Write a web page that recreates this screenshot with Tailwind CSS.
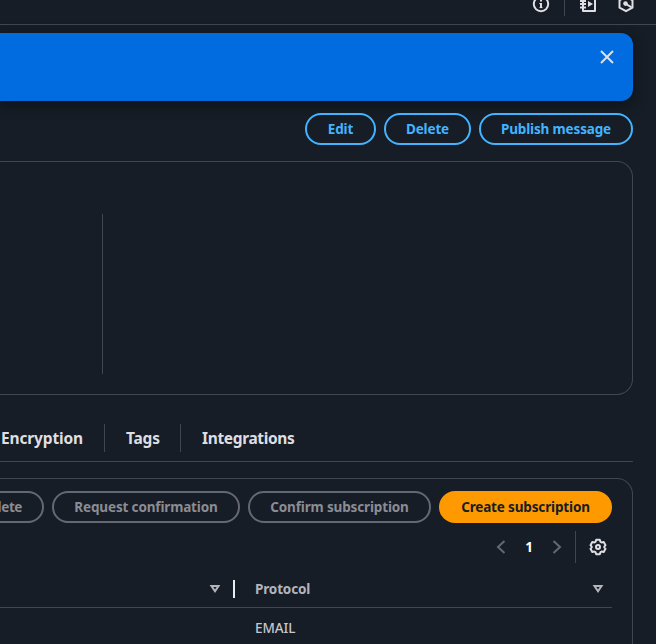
<!DOCTYPE html>
<html lang="en">
<head>
<meta charset="utf-8">
<title>Topic details</title>
<script src="https://cdn.jsdelivr.net/npm/@tailwindcss/browser@4"></script>
</head>
<body class="h-[644px] w-[656px] overflow-hidden bg-[#161d26] font-['Noto_Sans','Open_Sans',sans-serif] text-[13.5px] text-[#dedee3]">
<header class="flex h-[25px] items-start justify-end border-b border-[#424650] pr-[21px]">
  <svg class="-mt-[5px] h-[18px] w-[18px]" viewBox="0 0 18 18" fill="none" stroke="#dedee3" stroke-width="2"><circle cx="9" cy="9" r="7.200"/><path d="M9 8v5M9 4.500v2" /><path d="M7.300 8.500H9M7.500 12.600h3" stroke-width="1"/></svg>
  <span class="ml-[14px] h-4 w-px bg-[#424650]"></span>
  <svg class="-mt-[5px] ml-[14px] h-[18px] w-[18px]" viewBox="0 0 18 18" fill="none" stroke="#dedee3" stroke-width="2" stroke-linejoin="round"><path d="M4 2h12v14H4V2"/><path d="M1 6h6M1 9h6M1 12.500h6" stroke-width="1.900"/><path d="M9 6v6l5-3z" fill="#dedee3" stroke="none"/></svg>
  <svg class="-mt-[5px] ml-[20px] h-[18px] w-[18px]" viewBox="0 0 18 18" fill="none" stroke="#dedee3" stroke-width="2" stroke-linejoin="round"><path d="M9 1.500l6.500 3.800v7.400L9 16.200l-6.500-3.500V5.300z"/><circle cx="8.500" cy="8.600" r="2.300" fill="#dedee3" stroke="none"/><path d="M9 9l5.500 3.400"/></svg>
</header>
<main class="pr-[23px]">
  <section class="mt-2 flex h-[68px] justify-end rounded-r-[12px] bg-[#006ce0] pt-[17px] pr-[19px] shadow-[0_4px_12px_1px_#0f141a]">
    <svg class="h-[14px] w-[14px]" viewBox="0 0 14 14" fill="none" stroke="#dedee3" stroke-width="2"><path d="M1 1l12 12M13 1L1 13"/></svg>
  </section>
  <div class="mt-3 flex h-8 justify-end gap-2 font-bold whitespace-nowrap text-[#42b4ff]">
    <button class="w-[71px] rounded-full border-2 border-[#42b4ff] tracking-[-0.15px]">Edit</button>
    <button class="w-[87px] rounded-full border-2 border-[#42b4ff] tracking-[-0.15px]">Delete</button>
    <button class="w-[154px] rounded-full border-2 border-[#42b4ff] tracking-[-0.15px]">Publish message</button>
  </div>
  <section class="mt-4 h-[234px] rounded-r-[16px] border border-l-0 border-[#424650] pt-[52px] pl-[102px]">
    <div class="h-[160px] w-px bg-[#424650]"></div>
  </section>
  <nav class="flex h-[67px] items-center border-b border-[#424650] pt-[20px] text-[15.5px] font-bold whitespace-nowrap">
    <a class="w-[104px] pt-[2px] pl-[1px] tracking-[-0.15px]">Encryption</a>
    <span class="h-7 w-px bg-[#424650]"></span>
    <a class="w-[75px] pt-[2px] pl-[21px] tracking-[-0.2px]">Tags</a>
    <span class="h-7 w-px bg-[#424650]"></span>
    <a class="pt-[2px] pl-[21px] tracking-[-0.35px]">Integrations</a>
  </nav>
  <section class="mt-4 h-[180px] rounded-r-[16px] border border-l-0 border-[#424650] pt-3 pr-5">
    <div class="flex h-8 justify-end gap-2 font-bold whitespace-nowrap text-[#8c8c94]">
      <button class="-ml-[43px] w-[87px] shrink-0 rounded-full border-2 border-[#656871] pr-[20px] text-right tracking-[-0.4px]">Delete</button>
      <button class="w-[188px] shrink-0 rounded-full border-2 border-[#656871] tracking-[-0.15px]">Request confirmation</button>
      <button class="w-[183px] shrink-0 rounded-full border-2 border-[#656871] tracking-[-0.15px]">Confirm subscription</button>
      <button class="w-[173px] shrink-0 rounded-full bg-[#ff9900] tracking-[-0.15px] text-[#161d26]">Create subscription</button>
    </div>
    <div class="mt-2 flex h-8 items-center justify-end">
      <svg class="h-[14px] w-[10px]" viewBox="0 0 10 14" fill="none" stroke="#656871" stroke-width="2"><path d="M8.500 1L2 7l6.500 6"/></svg>
      <span class="w-[46px] text-center font-bold text-white">1</span>
      <svg class="h-[14px] w-[10px]" viewBox="0 0 10 14" fill="none" stroke="#656871" stroke-width="2"><path d="M1.500 1L8 7l-6.500 6"/></svg>
      <span class="ml-[13px] h-8 w-px bg-[#424650]"></span>
      <svg class="mr-[5px] ml-[13px] h-[18px] w-[18px]" viewBox="0 0 18 18" fill="none" stroke="#dedee3" stroke-width="2" stroke-linejoin="round"><path d="M7.200 1.800h3.600l.7 2 1.100.6 2.100-.4 1.800 3.200-1.400 1.800 1.400 1.800-1.800 3.200-2.100-.4-1.100.6-.7 2H7.200l-.7-2-1.100-.6-2.100.4-1.800-3.200L2.900 9 1.500 7.200 3.300 4l2.100.4 1.100-.6z"/><circle cx="9" cy="9" r="2"/></svg>
    </div>
    <div class="flex h-[45px] items-center border-b border-[#424650] pt-[7px] font-bold text-[#b4b4bb]">
      <svg class="ml-[209px] h-[10px] w-[12px]" viewBox="0 0 12 10" fill="none" stroke="#b4b4bb" stroke-width="2"><path d="M2.500 2h7L6 7.200z"/></svg>
      <span class="ml-[12px] h-[18px] w-[2px] bg-[#ebebf0]"></span>
      <span class="ml-[20px] pt-[2px] tracking-[-0.15px]">Protocol</span>
      <svg class="mr-[8px] ml-auto h-[10px] w-[12px]" viewBox="0 0 12 10" fill="none" stroke="#b4b4bb" stroke-width="2"><path d="M2.500 2h7L6 7.200z"/></svg>
    </div>
    <div class="pt-[10px] pl-[255px] leading-5 font-medium tracking-[-0.1px] text-[#c6c6cd]">EMAIL</div>
  </section>
</main>
</body>
</html>
